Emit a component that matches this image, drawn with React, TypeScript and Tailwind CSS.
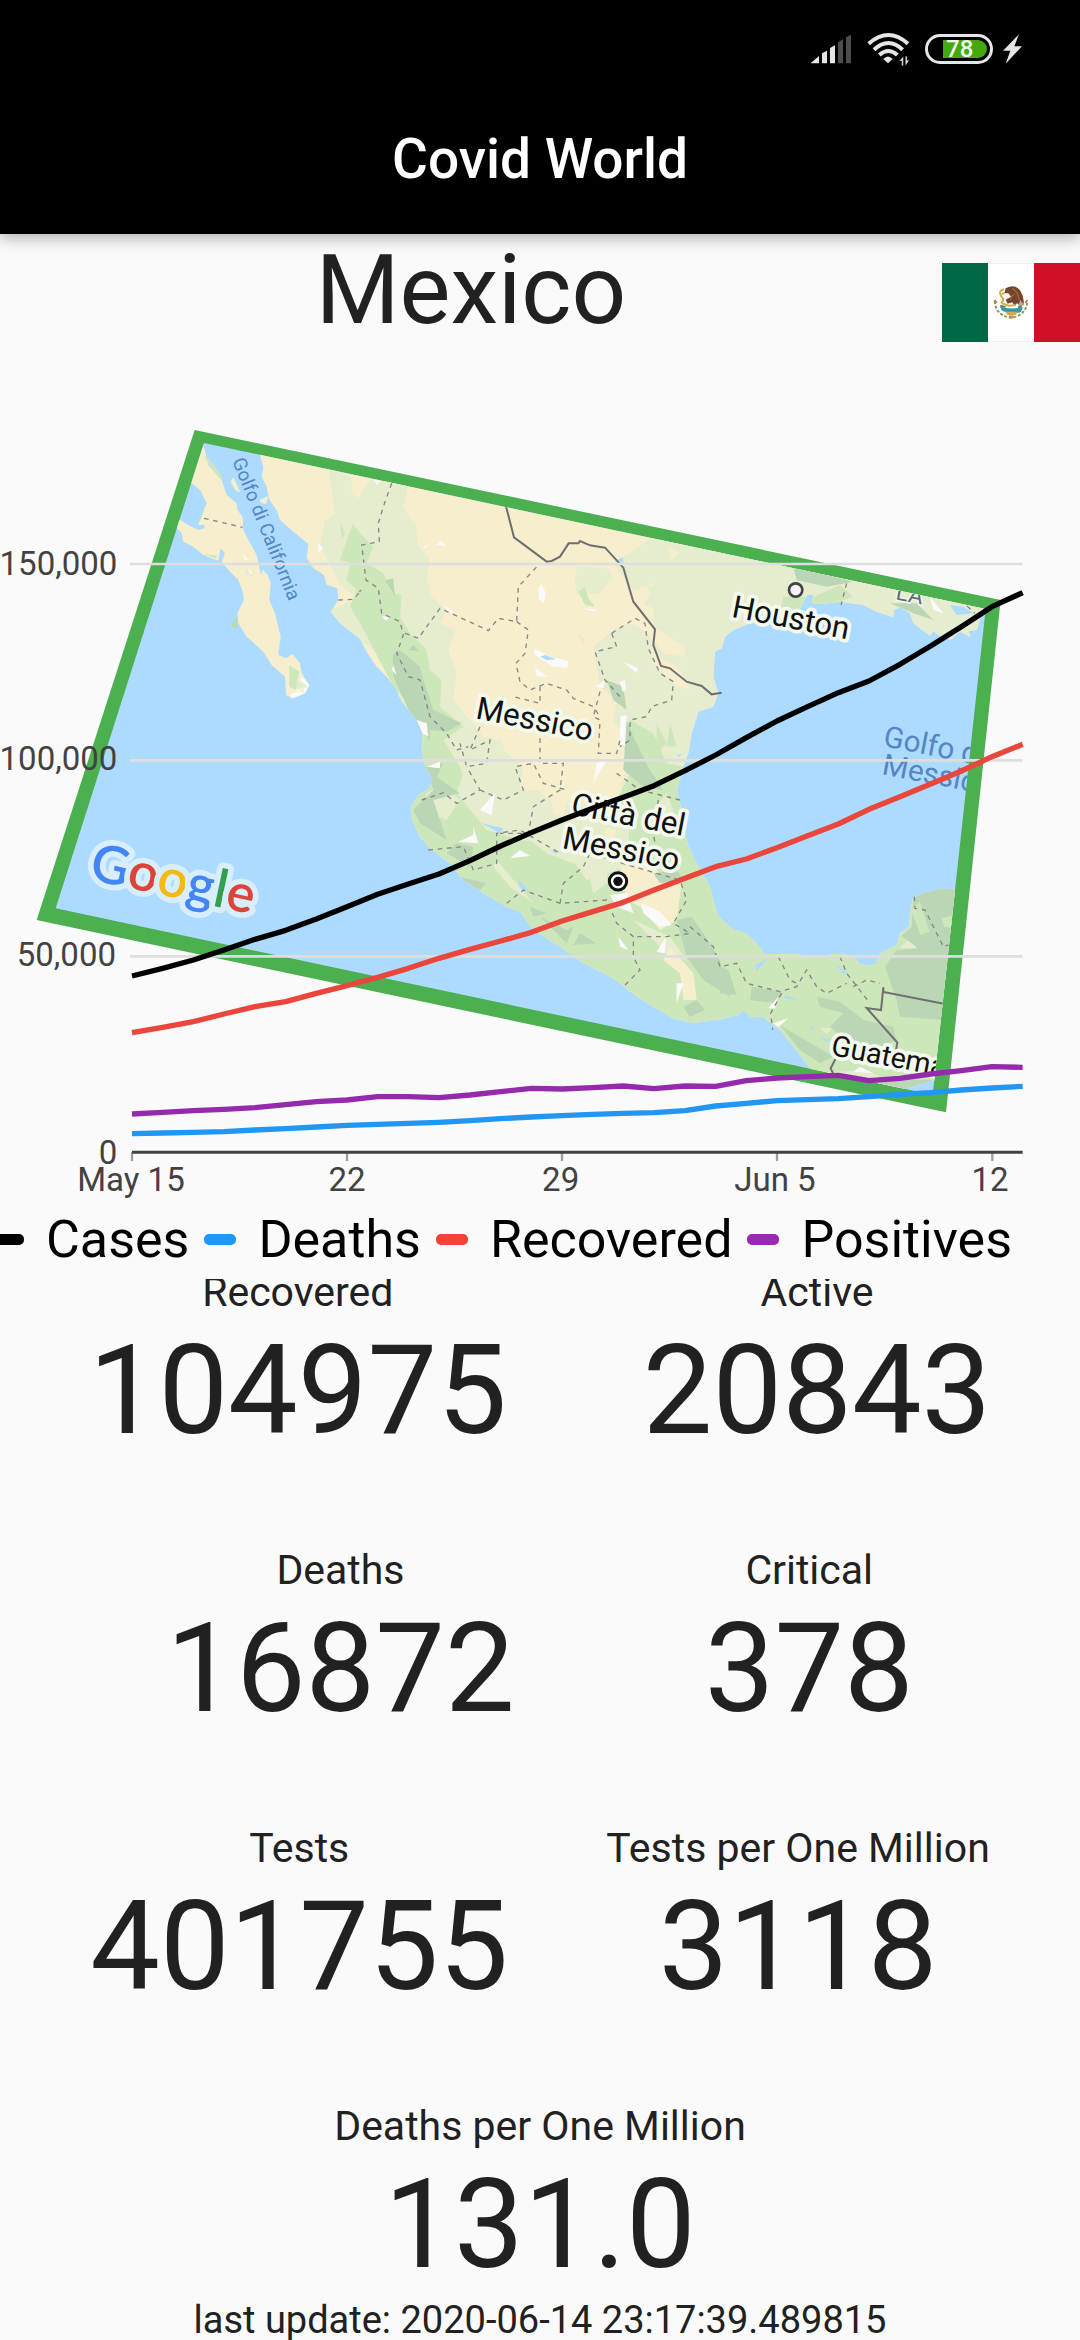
import React from "react";

const DAY = 92.14;
const START = 396;

const cases = [2928, 2905, 2880, 2850, 2818, 2791, 2757, 2720, 2683, 2652, 2622, 2582, 2538, 2498, 2460, 2425, 2392, 2357, 2312, 2265, 2213, 2163, 2120, 2078, 2043, 1993, 1938, 1880, 1820, 1778];
const recovered = [3098, 3082, 3065, 3042, 3020, 3005, 2980, 2957, 2932, 2905, 2875, 2848, 2823, 2797, 2763, 2735, 2707, 2670, 2635, 2600, 2577, 2543, 2507, 2472, 2428, 2390, 2352, 2313, 2270, 2233];
const positives = [3342, 3337, 3332, 3328, 3323, 3314, 3305, 3300, 3290, 3290, 3293, 3285, 3275, 3265, 3267, 3263, 3258, 3266, 3258, 3259, 3242, 3234, 3230, 3226, 3242, 3235, 3222, 3212, 3200, 3202];
const deaths = [3401, 3399, 3397, 3395, 3390, 3386, 3381, 3376, 3373, 3370, 3367, 3362, 3356, 3351, 3347, 3343, 3340, 3338, 3332, 3318, 3310, 3302, 3299, 3296, 3290, 3283, 3278, 3270, 3264, 3259];

const toPoints = (ys: number[]) => ys.map((y, i) => `${Math.round(START + i * DAY)},${y}`).join(" ");

const MAINLAND =
  "M775 1300 L780 1365 790 1400 785 1430 800 1460 808 1500 830 1530 840 1560 880 1595 925 1632 920 1675 940 1705 972 1725 980 1755 1012 1765 1015 1800 992 1835 1020 1870 1080 1917 1100 1955 1130 2000 1160 2030 1190 2070 1200 2095 1225 2130 1250 2160 1268 2200 1265 2240 1275 2300 1295 2330 1290 2365 1260 2382 1235 2415 1235 2455 1260 2510 1290 2545 1350 2590 1390 2640 1460 2685 1520 2720 1560 2735 1600 2790 1680 2840 1750 2890 1840 2935 1890 2975 1950 3015 2020 3055 2080 3070 2160 3058 2215 3045 2230 3030 2250 3050 2290 3052 2340 3090 2400 3165 2430 3205 2520 3250 2640 3278 2730 3262 2800 3240 3000 3380 2980 2670 2865 2668 2820 2666 2770 2678 2740 2695 2730 2730 2728 2780 2700 2800 2690 2835 2640 2860 2630 2890 2610 2897 2580 2893 2565 2873 2530 2862 2495 2862 2460 2870 2390 2863 2295 2862 2270 2830 2240 2802 2200 2788 2160 2755 2150 2735 2130 2660 2090 2590 2065 2540 2055 2500 2040 2410 2030 2370 2050 2300 2065 2260 2075 2200 2095 2135 2140 2120 2155 2080 2140 2030 2145 1955 2165 1945 2175 1910 2200 1890 2300 1850 2360 1830 2400 1825 2422 1785 2440 1785 2435 1808 2460 1812 2520 1805 2590 1815 2630 1835 2680 1852 2682 1830 2700 1822 2730 1840 2740 1870 2790 1907 2800 1893 2815 1905 2850 1920 2880 1895 2912 1912 2905 1893 2930 1890 2945 1840 3000 1700Z";

const BAJA =
  "M600 1290 L625 1395 665 1440 680 1485 710 1510 712 1530 728 1550 730 1590 745 1620 770 1665 778 1705 785 1725 788 1708 803 1725 812 1750 808 1800 825 1840 842 1910 835 1965 858 1975 878 1962 900 1990 905 2020 928 2055 915 2080 878 2096 858 2085 855 2030 815 1995 790 1955 740 1910 715 1870 712 1840 732 1800 728 1775 715 1740 690 1715 665 1685 675 1660 662 1645 655 1682 610 1665 580 1640 550 1625 545 1600 500 1555 540 1560 565 1575 595 1590 613 1585 614 1575 595 1575 610 1535 620 1510 600 1470 575 1450 500 1440Z";

function StatusBar() {
  return (
    <div className="flex h-[98px] items-center justify-end pr-[58px]">
      <svg className="h-[30px] w-10" viewBox="0 0 120 90" aria-label="Signal">
        <path d="M0 86 24 66V88H0ZM33 58 48 50V88H33ZM57 42 72 34V88H57Z" fill="#e6e6e6" />
        <path d="M81 25 96 16V88H81ZM105 10 120 2V88H105Z" fill="#4d4d4d" />
      </svg>
      <svg className="ml-4 h-[34px] w-[43px]" viewBox="0 0 129 102" aria-label="Wi-Fi">
        <g fill="none" stroke="#e6e6e6" strokeWidth="12">
          <path d="M5 35Q64-17 123 35" />
          <path d="M21 53Q64 13 107 53" />
          <path d="M37 69Q64 45 91 69" />
        </g>
        <path d="M49 81Q63 66 77 81L63 94Z" fill="#e6e6e6" />
        <path d="M109 73V101H104V87H97ZM115 101V73H120V85H127Z" fill="#e6e6e6" stroke="#000" strokeWidth="1" />
      </svg>
      <div className="ml-[15px] flex h-[30px] w-[68px] items-center justify-end rounded-full border-[3px] border-[#e6e6e6] pr-[3px]">
        <span className="flex h-[18px] w-11 items-center rounded-l-[2px] rounded-r-full bg-[#45a80d] pl-[3px] text-[24px] leading-none font-medium text-[#f0f7ec]">78</span>
      </div>
      <svg className="ml-2.5 h-[30px] w-[19px]" viewBox="0 0 57 90" aria-label="Charging">
        <path d="M48 1 0 50H22L8 89 57 37H34Z" fill="#e6e6e6" />
      </svg>
    </div>
  );
}

function Flag() {
  return (
    <div className="flex h-[79px] w-[138px] shrink-0" role="img" aria-label="Flag of Mexico">
      <div className="flex-1 bg-[#006847]" />
      <div className="flex flex-1 items-center justify-center border-y border-[#f0f0f0] bg-white">
        <svg className="h-9 w-9" viewBox="0 0 108 108">
          <path d="M5 48Q8 92 54 98Q100 92 103 48" fill="none" stroke="#8d9b57" strokeWidth="6" strokeDasharray="9 5" />
          <path d="M5 45l6 9M103 45l-6 9" stroke="#b48b45" strokeWidth="6" />
          <path d="M20 64Q55 76 90 66L84 81Q55 90 27 77Z" fill="#2f9ba6" />
          <path d="M36 80H75L68 90H44Z" fill="#d6a84c" />
          <path d="M48 91H62V100H48Z" fill="#b88b91" />
          <path d="M38 10Q65-6 82 17Q96 39 91 62L83 50 82 65 72 54 66 64 58 52 44 56 38 44 54 35 46 25 34 25Z" fill="#74452a" />
          <path d="M82 45L93 59L83 68L76 60Z" fill="#b9a8a2" />
          <path d="M58 10Q76 21 78 45M65 27Q53 34 52 44" fill="none" stroke="#9b693e" strokeWidth="4" />
          <path d="M33 13Q14 18 25 34Q37 46 24 54M34 25L26 27M27 55L47 62L68 60" fill="none" stroke="#cfac50" strokeWidth="6" />
          <path d="M22 62L38 66M75 67L86 64" stroke="#617a39" strokeWidth="5" />
        </svg>
      </div>
      <div className="flex-1 bg-[#ce1126]" />
    </div>
  );
}

function MapLayer() {
  return (
    <g>
      <polygon points="584,1290 3002,1800 2838,3337 110,2760" fill="#4caf50" />
      <clipPath id="frame">
        <polygon points="612,1329 2957,1827 2798,3284 167,2725" />
      </clipPath>
      <clipPath id="land">
        <path d={MAINLAND} />
      </clipPath>
      <g clipPath="url(#frame)">
        <rect x="100" y="1280" width="2900" height="2100" fill="#addbff" />
        <path d={BAJA} fill="#f7eece" />
        <path d="M868 1995 898 2015 888 2070 868 2060Z" fill="#cde7bb" />
        <path d="M905 2030 928 2055 915 2080 890 2072ZM875 2095 915 2080 910 2065 870 2085Z" fill="#fafafa" />
        <path d="M890 2035 925 2060 890 2070Z" fill="#e6edce" />
        <path d="M712 1848 692 1878 712 1885Z" fill="#bcd9ae" />
        <path d="M740 1705 765 1728 735 1725Z" fill="#e6edce" />
        <path d="M725 1660 745 1680 735 1680ZM742 1705 757 1720 750 1722Z" fill="#fafafa" />
        <path d="M612 1366Q640 1420 668 1442L660 1418 625 1375ZM610 1662 645 1675 655 1667Z" fill="#cde7bb" />
        <path d="M692 1445 700 1432 722 1478 705 1470ZM778 1500 805 1488 798 1512 785 1510Z" fill="#f3efcf" />
        <path d={MAINLAND} fill="#f7eece" />
        <g clipPath="url(#land)">
          <g fill="#e6edce">
            <path d="M985 1400 1055 1435 1055 1480 1075 1495 1110 1440 1150 1445 1165 1400 1230 1430 1210 1520 1240 1570 1250 1630 1290 1680 1280 1730 1295 1790 1340 1830 1320 1870 1365 1890 1345 1950 1370 2020 1360 2100 1410 2160 1450 2210 1500 2220 1530 2270 1570 2300 1600 2380 1700 2410 1760 2450 1850 2420 1880 2300 1870 2200 1840 2160 1850 2100 1800 2060 1780 1940 1840 1890 1890 1870 1950 1900 1960 1990 2030 2060 2160 2080 2160 2300 2040 2700 1200 2700 1200 2000 1000 1870 980 1830 1070 1800 1020 1750 960 1640 975 1560 1005 1545Z" />
            <path d="M1200 1600 1255 1630 1245 1560 1205 1590Z" />
            <path d="M1730 1700 1820 1705 1840 1730 1800 1780 1730 1785 1725 1740Z" />
            <path d="M1840 1690 1890 1660 1950 1615 1945 1580 2090 1590 3000 1780 3000 1960 2150 2000 2150 2120 2090 2110 2040 2010 1980 1970 1950 1920 1960 1890 2055 1920 2060 1965 1970 1940 1930 1820 1965 1750 1900 1770Z" />
            <path d="M1730 1900 1755 1915 1750 1935ZM1940 1760 1965 1755 1955 1785Z" />
          </g>
          <path d="M2005 1640 2040 1660 2010 1680ZM1900 1800 1960 1825 1960 1880 2055 1940 2055 1970 1990 1960 1940 1900 1900 1860Z" fill="#f7eece" />
          <g fill="#cde7bb">
            <path d="M1020 1680 1058 1570 1085 1605 1120 1640 1100 1690 1150 1720 1175 1780 1205 1785 1200 1850 1230 1900 1280 1950 1290 2010 1325 2040 1320 2120 1390 2180 1330 2220 1380 2300 1410 2400 1440 2450 1500 2500 1560 2495 1640 2560 1720 2590 1760 2530 1870 2590 1890 2480 1850 2400 1900 2300 1870 2200 1890 2160 1960 2200 2000 2290 2100 2310 2200 2700 2360 2780 2980 2640 2980 3350 2400 3300 1700 3080 1200 2600 1200 2350 1270 2300 1260 2150 1180 2060 1080 1870 1050 1820 1070 1770 1040 1740 1050 1690Z" />
            <path d="M1022 1570 1035 1600 1025 1620ZM1735 1775 1755 1760 1765 1795 1785 1820 1755 1815ZM2350 1790 2440 1790 2520 1755 2560 1790 2470 1820 2340 1830Z" />
            <path d="M1880 2190 1920 2230 1900 2270 1860 2230ZM1970 2170 2000 2230 1970 2260ZM2010 2170 2030 2240 2000 2240Z" />
          </g>
          <g fill="#e6edce">
            <path d="M1400 2290 1480 2250 1560 2280 1650 2420 1780 2460 1890 2440 1880 2600 1760 2640 1680 2530 1560 2520 1460 2490 1370 2380Z" />
            <path d="M1490 2580 1600 2710 1530 2660 1480 2600ZM1750 2560 1830 2540 1820 2650 1780 2680ZM1960 2430 2000 2380 2030 2460 1990 2500Z" />
            <path d="M1280 2380 1330 2350 1380 2400 1340 2460 1260 2430Z" />
            <path d="M1900 2760 2010 2810 2060 2880 2000 2860ZM2460 3085 2495 3085 2480 3102ZM2510 3100 2530 3085 2545 3110Z" />
            <path d="M2440 3220 2600 3210 2720 3270 2640 3260ZM2700 2845 2730 2815 2750 2845Z" />
          </g>
          <g fill="#f7eece">
            <path d="M1520 2220 1870 2220 1850 2290 1860 2350 1820 2380 1740 2340 1700 2400 1690 2450 1660 2440 1650 2370 1560 2370 1570 2300 1510 2250Z" />
            <path d="M1860 2600 1950 2590 2000 2640 2045 2650 2030 2760 1980 2790 1920 2720 1880 2700ZM2010 2840 2080 2920 2090 3000 2050 3000 2040 2920 1990 2880ZM1810 2480 1850 2490 1830 2540Z" />
          </g>
          <g fill="#bad6b4">
            <path d="M1178 1965 1200 1950 1260 2000 1270 2040 1300 2130 1385 2170 1340 2195 1290 2190 1290 2225 1230 2140 1180 2030Z" />
            <path d="M1155 1740 1180 1735 1185 1790ZM1225 1950 1240 1935 1260 1955ZM1275 2300 1330 2290 1310 2330 1380 2380 1300 2400 1340 2520 1260 2470 1240 2430 1300 2370Z" />
            <path d="M1370 2530 1420 2540 1410 2600 1340 2560ZM1380 2630 1460 2650 1430 2680ZM1620 2750 1700 2790 1720 2780 1700 2830ZM1740 2800 1790 2830 1720 2835ZM1590 2720 1640 2740 1600 2750Z" />
            <path d="M1820 2040 1870 2060 1880 2130 1840 2100ZM1880 2160 1900 2210 1950 2310 1990 2370 1930 2360 1870 2310ZM1960 2620 2030 2610 2050 2640 1980 2650Z" />
            <path d="M2030 2760 2075 2750 2110 2800 2160 2880 2190 2990 2110 2940 2060 2870ZM2160 2900 2185 2910 2210 2985 2160 2980ZM2050 3020 2090 3000 2115 3030 2070 3050Z" />
            <path d="M2255 2960 2345 2975 2330 3010 2250 3000ZM2450 2990 2520 3005 2590 3060 2680 3080 2690 3120 2620 3150 2550 3130 2490 3080 2530 3040 2460 3020ZM2340 3075 2500 3170 2460 3190 2400 3150Z" />
            <path d="M2740 2695 2770 2675 2820 2660 2980 2650 2960 3030 2840 3060 2700 3050 2690 3000 2655 2900 2690 2850 2755 2845 2705 2808 2735 2780Z" />
            <path d="M2380 1700 2560 1745 2480 1760 2390 1740ZM2670 1810 2750 1810 2800 1860 2740 1840ZM2530 3235 2800 3240 2790 3290 2640 3275Z" />
          </g>
          <path d="M2732 2728 2760 2705 2788 2795 2762 2805ZM2825 2755 2862 2745 2858 2785 2832 2780Z" fill="#cde7bb" />
          <g fill="#fafafa">
            <path d="M955 1630 970 1645 955 1660ZM1122 1440 1142 1442 1130 1455ZM1145 1850 1172 1848 1160 1862ZM1270 1640 1285 1633 1275 1645ZM1308 1636 1325 1623 1338 1638ZM1180 1995 1190 2025 1175 2010ZM1220 2150 1280 2170 1285 2210 1250 2190Z" />
            <path d="M1328 1812 1365 1838 1350 1838ZM1615 1765 1625 1752 1637 1780 1632 1810 1616 1798ZM1600 1945 1650 1970 1705 1983 1702 2003 1660 2000 1605 1965ZM1605 2003 1645 2030 1610 2028ZM1745 1825 1785 1828 1788 1836ZM1870 1985 1915 2005 1908 2018ZM1785 2060 1815 2040 1810 2065ZM1860 2045 1875 2040 1878 2070 1868 2075ZM1862 2150 1880 2145 1875 2240 1858 2230Z" />
            <path d="M1280 2300 1320 2285 1320 2305ZM1475 2390 1485 2380 1475 2445 1440 2430ZM1420 2480 1435 2530 1375 2525 1420 2505ZM1530 2575 1560 2550 1590 2568ZM1790 2290 1820 2280 1780 2350ZM1830 2685 1880 2680 1900 2740 1850 2720ZM1925 2710 1980 2735 2015 2775 1980 2780 1930 2740ZM1970 2855 1998 2810 1995 2860ZM2030 3010 2030 2950 2050 2950ZM1855 2810 1885 2850 1860 2840ZM2305 3025 2335 2990 2325 3025ZM2320 3070 2365 3055 2335 3082ZM2580 3200 2620 3220 2560 3215ZM2790 1790 2830 1840 2800 1830Z" />
          </g>
          <g fill="#addbff">
            <path d="M1620 1970 1635 1965 1668 1978 1640 1980ZM1850 1680 1868 1672 1870 1690ZM1445 2470 1510 2485 1500 2500ZM1555 2640 1590 2675 1650 2695 1560 2665ZM2265 2895 2303 2877 2270 2912ZM2355 2985 2395 3000 2355 2995ZM2500 2888 2545 2920 2530 2920ZM2430 3085 2445 3080 2430 3092ZM2455 3110 2490 3120 2480 3125ZM1650 2550 1680 2555 1665 2560ZM2030 2265 2050 2262 2035 2270ZM2850 1815 2890 1820 2920 1840 2870 1845Z" />
          </g>
          <path d="M2740 3270 2800 3240 2820 3300Z" fill="#addbff" />
        </g>
        <g fill="none" stroke="#868686" strokeWidth="4" strokeDasharray="14 14">
          <path d="M612 1555 728 1582M1015 1800 1060 1798 1085 1770 1078 1775" />
          <path d="M1175 1450 1150 1520 1135 1570 1138 1625 1085 1635 1098 1740 1135 1765 1145 1840 1200 1865 1210 1905 1190 1960 1225 2030 1260 2040 1290 2150 1340 2200 1370 2250 1405 2240" />
          <path d="M1215 1900 1255 1915 1320 1825 1440 1880 1465 1892 1495 1855 1550 1865 1555 1760 1620 1690M1550 1865 1585 1890 1575 1960 1548 1990 1560 2045 1590 2070 1640 2050 1700 2070 1720 2095 1780 2120 1800 2150M1620 2060 1620 2110 1540 2090M1800 2075 1780 2150 1800 2160 1795 2260 1850 2260 1860 2220" />
          <path d="M1835 1900 1905 1855 1935 1870 1945 1945 1980 2020 2020 2045 2015 2100 1955 2120 1940 2150 1890 2160 1890 2220 1860 2240M1835 1900 1850 1940 1785 1955 1815 2040 1860 2090M1440 2180 1410 2250 1470 2220 1460 2290 1400 2300 1380 2230M1620 2215 1620 2290 1690 2290 1680 2370 1600 2420 1585 2500 1500 2500" />
          <path d="M1265 2400 1330 2378 1370 2410 1440 2370 1400 2300M1440 2370 1510 2400 1570 2370 1545 2300 1600 2290 1630 2350 1700 2370M1285 2550 1390 2540 1420 2610 1490 2590 1490 2500 1560 2490 1680 2560M1520 2710 1570 2670 1680 2710 1820 2700 1850 2770 1900 2810 1900 2870 1920 2910 1870 2960M1680 2710 1690 2650 1750 2600 1770 2560 1900 2600 2040 2640 2060 2700 2020 2770 2070 2800 2000 2810 1900 2810" />
          <path d="M1850 2320 1920 2370 2040 2400M1975 2400 1960 2500 1970 2560M2070 2780 2140 2840 2160 2900 2210 2890 2240 2950 2340 2975 2390 2960 2420 2910 2450 2960 2480 2980 2540 2950M2335 2870 2370 2940 2390 2950M2520 2870 2540 2920 2610 3010M2560 2960 2600 2940 2640 2950M2743 2690 2745 2725 2775 2730 2830 2840 2845 2835M2345 2980 2312 3040 2318 3090M2540 1750 2523 1815M2860 1780 2925 1840" />
        </g>
        <path d="M1517 1515 1542 1612 1640 1685 1655 1683 1680 1670 1706 1630 1735 1630 1740 1623 1770 1636 1815 1643 1870 1703 1900 1805 1965 1888 1960 1935 1983 1998 2010 2005 2060 2045 2105 2058 2135 2083 2165 2078M2835 3012 2650 2976 2650 2962 2643 3030 2600 3024 2692 3128 2688 3152M2510 3170 2492 3205 2500 3222" fill="none" stroke="#6f6f6f" strokeWidth="6" />
        <circle cx="2387" cy="1770" r="20" fill="#f5f5f5" stroke="#444" strokeWidth="8" />
        <circle cx="1854" cy="2644" r="26" fill="#fff" stroke="#111" strokeWidth="9" />
        <circle cx="1854" cy="2644" r="14" fill="#111" />
        <g fontSize="94" fill="#111" stroke="#f4f9ee" strokeWidth="22" strokeLinejoin="round" paintOrder="stroke">
          <text transform="translate(1424 2155) rotate(11)">Messico</text>
          <text transform="translate(2192 1850) rotate(11)">Houston</text>
          <text transform="translate(1710 2442) rotate(11)">Città del</text>
          <text transform="translate(1684 2544) rotate(11)">Messico</text>
          <text transform="translate(2490 3164) rotate(11)" fontSize="86">Guatemala</text>
        </g>
        <text transform="translate(2685 1798) rotate(11)" fontSize="68" fill="#587078" stroke="#f4f9ee" strokeWidth="8" paintOrder="stroke">LA</text>
        <g fill="#5485c5">
          <text transform="translate(2647 2238) rotate(11)" fontSize="89">Golfo del</text>
          <text transform="translate(2643 2322) rotate(11)" fontSize="89">Messico</text>
          <text transform="translate(696 1382) rotate(68)" fontSize="57">Golfo di California</text>
        </g>
        <text transform="translate(264 2638) rotate(12)" fontSize="158" fontFamily="Lato" fontWeight="600" stroke="#d9eefd" strokeWidth="34" strokeLinejoin="round" paintOrder="stroke">
          <tspan fill="#4285f4">G</tspan>
          <tspan fill="#db4437">o</tspan>
          <tspan fill="#f4b912">o</tspan>
          <tspan fill="#4285f4">g</tspan>
          <tspan fill="#34a04f">l</tspan>
          <tspan fill="#db4437">e</tspan>
        </text>
      </g>
    </g>
  );
}

function Chart() {
  return (
    <svg className="block w-full" viewBox="0 1113 3240 2487" fontFamily="Roboto, sans-serif">
      <MapLayer />
      <path d="M390 1692H3068M390 2281H3068M390 2869H3068" stroke="#dedede" strokeWidth="8" />
      <path d="M396 3457V3483M1041 3457V3483M1686 3457V3483M2331 3457V3483M2977 3457V3483" stroke="#9e9e9e" strokeWidth="7" />
      <path d="M396 3457H3068" stroke="#424242" strokeWidth="9" />
      <g fill="none" strokeWidth="16" strokeLinejoin="round">
        <polyline points={toPoints(cases)} stroke="#000" />
        <polyline points={toPoints(deaths)} stroke="#2196f3" />
        <polyline points={toPoints(recovered)} stroke="#ea463c" />
        <polyline points={toPoints(positives)} stroke="#962aad" />
      </g>
      <g fontSize="99" fill="#424242" textAnchor="end">
        <text x="352" y="1725">150,000</text>
        <text x="352" y="2310">100,000</text>
        <text x="348" y="2897">50,000</text>
        <text x="352" y="3491">0</text>
      </g>
      <g fontSize="99" fill="#424242" textAnchor="middle">
        <text x="393" y="3573">May 15</text>
        <text x="1041" y="3573">22</text>
        <text x="1682" y="3573">29</text>
        <text x="2325" y="3573">Jun 5</text>
        <text x="2970" y="3573">12</text>
      </g>
    </svg>
  );
}

function Legend() {
  const dash = "mr-[22px] h-[11px] w-8 shrink-0 rounded-[5px]";
  return (
    <ul className="-ml-2 flex h-[79px] items-center gap-[15px] text-[52px] leading-none text-black">
      <li className="flex items-center"><i className={`${dash} bg-black`} />Cases</li>
      <li className="flex items-center"><i className={`${dash} bg-[#2196f3]`} />Deaths</li>
      <li className="flex items-center"><i className={`${dash} bg-[#f44336]`} />Recovered</li>
      <li className="flex items-center"><i className={`${dash} bg-[#9c27b0]`} />Positives</li>
    </ul>
  );
}

function Stat({ label, value }: { label: string; value: string }) {
  return (
    <div className="text-center">
      <dt className="text-[41px] leading-[50px]">{label}</dt>
      <dd className="text-[124px] leading-[147px]">{value}</dd>
    </div>
  );
}

export default function App() {
  return (
    <div className="min-h-screen overflow-hidden bg-[#fafafa] font-[Roboto,sans-serif] text-[#212121]">
      <header className="relative bg-black text-white shadow-[0_4px_14px_rgba(0,0,0,0.3)]">
        <StatusBar />
        <h1 className="h-[136px] pt-[29px] text-center text-[55px] leading-[64px] font-medium">Covid World</h1>
      </header>
      <main>
        <div className="flex h-[137px] items-center">
          <h2 className="flex-1 self-start text-center text-[96px] leading-[113px]">Mexico</h2>
          <Flag />
        </div>
        <Chart />
        <Legend />
        <section className="overflow-hidden">
          <dl className="-mt-3 flex flex-col gap-[81px]">
            <div className="flex justify-center gap-[136px]">
              <Stat label="Recovered" value="104975" />
              <Stat label="Active" value="20843" />
            </div>
            <div className="flex justify-center gap-[190px]">
              <Stat label="Deaths" value="16872" />
              <Stat label="Critical" value="378" />
            </div>
            <div className="flex justify-center gap-[98px]">
              <Stat label="Tests" value="401755" />
              <Stat label="Tests per One Million" value="3118" />
            </div>
            <Stat label="Deaths per One Million" value="131.0" />
          </dl>
          <p className="text-center text-[38px] leading-[44px]">last update: 2020-06-14 23:17:39.489815</p>
        </section>
      </main>
    </div>
  );
}
